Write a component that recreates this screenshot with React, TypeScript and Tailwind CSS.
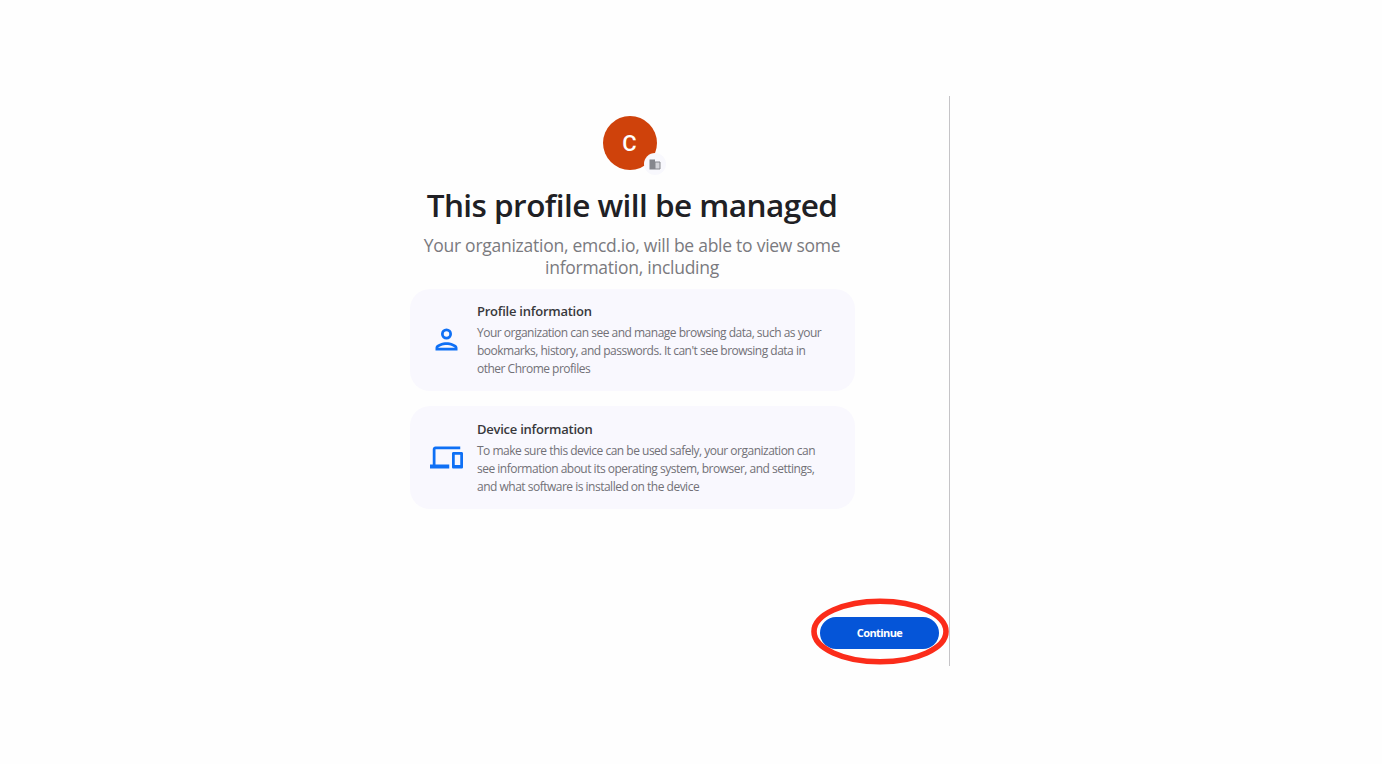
import type { ReactNode } from 'react';

type InfoCardProps = {
  icon: ReactNode;
  title: ReactNode;
  className: string;
  children: ReactNode;
};

function InfoCard({ icon, title, className, children }: InfoCardProps) {
  return (
    <section className={`flex rounded-[20px] bg-[#f9f8fe] pl-5 ${className}`}>
      <div className="mr-[14px] flex w-[33px] shrink-0 items-center text-[#0f70f5]">{icon}</div>
      <div className="whitespace-nowrap">
        <h2 className="text-[13px] leading-[18px] font-semibold tracking-[-0.25px] text-[#38383c]">{title}</h2>
        <p className="mt-1 text-[12px] leading-[18px] tracking-[-0.5px] text-[#727177]">{children}</p>
      </div>
    </section>
  );
}

function PersonIcon() {
  return (
    <svg viewBox="0 0 24 24" className="size-[33px]" fill="currentColor">
      <path d="M12 6a2 2 0 1 1 0 4 2 2 0 0 1 0-4m0 10c2.7 0 5.8 1.29 6 2H6c.23-.72 3.31-2 6-2m0-12a4 4 0 1 0 0 8 4 4 0 0 0 0-8zm0 10c-2.67 0-8 1.34-8 4v2h16v-2c0-2.66-5.33-4-8-4z" />
    </svg>
  );
}

function DevicesIcon() {
  return (
    <svg viewBox="0 0 24 24" className="size-[33px]" fill="currentColor">
      <path d="M4 6h18V4H4c-1.1 0-2 .9-2 2v11H0v3h14v-3H4V6zm19 2h-6c-.55 0-1 .45-1 1v10c0 .55.45 1 1 1h6c.55 0 1-.45 1-1V9c0-.55-.45-1-1-1zm-1 9.5h-4V10h4v7.5z" />
    </svg>
  );
}

function Avatar() {
  return (
    <div className="relative mt-5 mr-[5px] flex size-[54px] items-center justify-center rounded-full bg-[#cf420b]">
      <span className="pt-px font-['Roboto',sans-serif] text-[22px] leading-none font-medium text-white">C</span>
      {/* Organization badge */}
      <div className="absolute top-[37px] left-[41px] flex size-[22px] items-center justify-center rounded-full bg-[#f8f8fd]">
        <svg viewBox="0 0 12 11" className="h-[11px] w-3">
          <path d="M0.5 0.5h5.5v10h-5.5z" fill="#85878d" />
          <path d="M6 3h5v7h-5z" fill="#d3d4d9" stroke="#85878d" strokeWidth="1" />
        </svg>
      </div>
    </div>
  );
}

export default function App() {
  return (
    <main className="flex h-[764px] w-[1382px] bg-[#fefefe] pt-24 pl-[410px] font-['Open_Sans','Noto_Sans',sans-serif]">
      <div className="flex h-[570px] w-[540px] flex-col border-r border-[#c5c4c7]">
        <div className="flex w-[444px] flex-col items-center whitespace-nowrap">
          <Avatar />
          <h1 className="mt-[13px] text-[31.5px] leading-[44px] font-semibold tracking-[-0.54px] text-[#202024]">
            This profile will be managed
          </h1>
          <p className="mt-[7px] text-center text-[17.5px] leading-[22px] tracking-[-0.26px] text-[#7a7a7e]">
            Your organization, emcd.io, will be able to view some
            <br />
            information, including
          </p>
        </div>

        <InfoCard
          icon={<PersonIcon />}
          title="Profile information"
          className="mt-[11px] h-[102px] w-[445px] pt-[13px] pb-[14px]"
        >
          Your organization can see and manage browsing data, such as your
          <br />
          bookmarks, history, and passwords. It can't see browsing data in
          <br />
          other Chrome profiles
        </InfoCard>

        <InfoCard
          icon={<DevicesIcon />}
          title="Device information"
          className="mt-[15px] h-[103px] w-[445px] pt-[14px] pb-[15px]"
        >
          To make sure this device can be used safely, your organization can
          <br />
          see information about its operating system, browser, and settings,
          <br />
          and what software is installed on the device
        </InfoCard>

        <div className="mt-[108px] flex justify-end pr-[10px]">
          <div className="relative">
            <button className="block h-8 w-[119px] rounded-full bg-[#0555d8] pt-px text-[11px] font-bold tracking-[-0.6px] text-white">
              Continue
            </button>
            {/* Highlight ring around the button */}
            <svg viewBox="0 0 140 68" className="pointer-events-none absolute top-[-20px] left-[-10px] h-[68px] w-[140px] max-w-none">
              <ellipse cx="70" cy="34.5" rx="66" ry="30.3" fill="none" stroke="#fb2c1a" strokeWidth="5.6" />
            </svg>
          </div>
        </div>
      </div>
    </main>
  );
}
